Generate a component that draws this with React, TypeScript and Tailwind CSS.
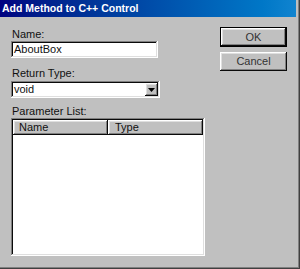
const raised =
  "shadow-[inset_-1px_-1px_#0a0a0a,inset_1px_1px_#ffffff,inset_-2px_-2px_#808080,inset_2px_2px_#dfdfdf]"

function Field({ children, className }: { children?: React.ReactNode; className?: string }) {
  return (
    <div
      className={
        "bg-white shadow-[inset_-1px_-1px_#ffffff,inset_1px_1px_#808080,inset_-2px_-2px_#dfdfdf,inset_2px_2px_#0a0a0a] " +
        (className || "")
      }
    >
      {children}
    </div>
  )
}

export default function App() {
  return (
    <div className="w-[300px] h-[269px] bg-[#c0c0c0] border-r border-b border-[#404040] font-['Liberation_Sans',Arial,sans-serif] text-[11px] text-[#111]">
      <div className="h-full border-r border-b border-[#808080] pr-[2px] flex flex-col">
        {/* title bar */}
        <div className="h-[17px] flex items-center pl-[2px] bg-gradient-to-r from-[#000080] to-[#1084d0]">
          <span className="text-white font-bold text-[10.5px] leading-[13px]">Add Method to C++ Control</span>
        </div>

        <div className="flex">
          <div className="ml-[11px] w-[194px] pt-[11px] flex flex-col">
            <div className="h-[13px] leading-[13px] pl-[1px]">Name:</div>
            <Field className="w-[147px] h-[17px] flex items-center pl-[3px] leading-[13px]">AboutBox</Field>

            <div className="mt-[9px] h-[13px] leading-[13px] pl-[1px]">Return Type:</div>
            <Field className="mt-[1px] w-[149px] h-[17px] flex items-center justify-between pl-[3px] pr-[2px] leading-[13px]">
              <span>void</span>
              <div className={"w-[13px] h-[13px] bg-[#c0c0c0] flex items-center justify-center " + raised}>
                <svg width="7" height="4" viewBox="0 0 7 4">
                  <path d="M0 0h7L3.5 4z" fill="#000" />
                </svg>
              </div>
            </Field>

            <div className="mt-[7px] h-[13px] leading-[13px] pl-[1px]">Parameter List:</div>
            <Field className="h-[138px] p-[2px] flex flex-col">
              <div className="flex h-[15px]">
                <div className={"w-[95px] h-full bg-[#c0c0c0] pl-[6px] leading-[15px] " + raised}>Name</div>
                <div className={"flex-1 h-full bg-[#c0c0c0] pl-[7px] leading-[15px] " + raised}>Type</div>
              </div>
              <div className="flex-1 bg-white" />
            </Field>
          </div>

          <div className="ml-[15px] pt-[10px] flex flex-col">
            <div className="w-[67px] h-[20px] border border-black">
              <div className={"w-full h-full bg-[#c0c0c0] flex items-center justify-center text-[#333] " + raised}>OK</div>
            </div>
            <div className={"mt-[5px] w-[67px] h-[19px] bg-[#c0c0c0] flex items-center justify-center text-[#333] " + raised}>
              Cancel
            </div>
          </div>
        </div>
      </div>
    </div>
  )
}
